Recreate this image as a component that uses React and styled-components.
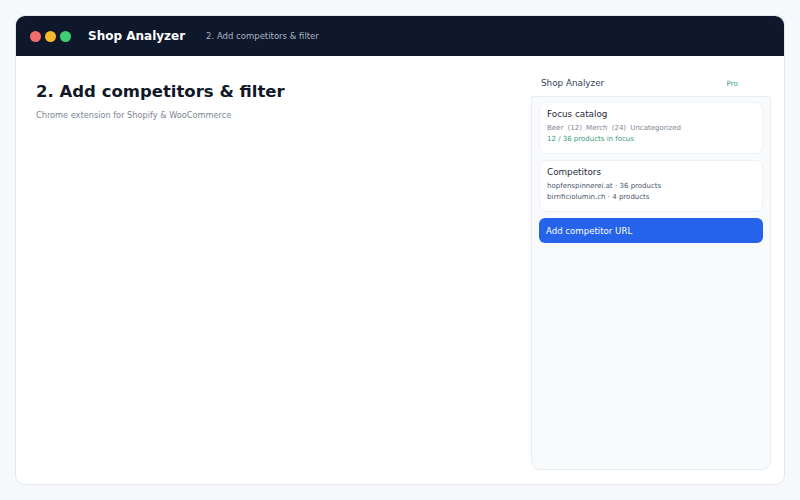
import React from "react";
import styled, { createGlobalStyle } from "styled-components";

const GlobalStyle = createGlobalStyle`
  html, body {
    margin: 0;
    padding: 0;
    background: #f6f8fb;
    font-family: "DejaVu Sans", "Liberation Sans", sans-serif;
  }
`;

const Page = styled.div`
  width: 800px;
  height: 500px;
  padding: 15px;
  box-sizing: border-box;
`;

const Frame = styled.div`
  height: 100%;
  background: #ffffff;
  border: 1px solid #e3e8ef;
  border-radius: 10px;
  overflow: hidden;
  display: flex;
  flex-direction: column;
  box-sizing: border-box;
`;

const TitleBar = styled.header`
  height: 40px;
  flex-shrink: 0;
  background: #111827;
  background: #0f172a;
  display: flex;
  align-items: center;
  padding-left: 14px;
`;

const Dots = styled.div`
  display: flex;
  gap: 4px;
  margin-right: 17px;
`;

const Dot = styled.span`
  width: 11px;
  height: 11px;
  border-radius: 50%;
  background: ${(p) => p.color};
`;

const Brand = styled.span`
  color: #ffffff;
  font-weight: 700;
  font-size: 12px;
  margin-right: 21px;
`;

const Crumb = styled.span`
  color: #aab4c3;
  font-size: 8.5px;
`;

const Body = styled.div`
  flex: 1;
  display: flex;
  min-height: 0;
`;

const Main = styled.main`
  flex: 1;
  padding: 25px 20px;
`;

const Heading = styled.h1`
  margin: 0;
  font-size: 16.5px;
  font-weight: 700;
  color: #111827;
  line-height: 22px;
`;

const Subtitle = styled.p`
  margin: 7px 0 0;
  font-size: 8.2px;
  color: #7b8594;
`;

const Sidebar = styled.aside`
  width: 240px;
  margin: 14px 13px 14px 0;
  display: flex;
  flex-direction: column;
`;

const SideHeader = styled.div`
  height: 26px;
  display: flex;
  align-items: center;
  justify-content: space-between;
  padding: 0 33px 0 10px;
  font-size: 8.8px;
  color: #334155;
`;

const ProTag = styled.span`
  color: #34a37a;
  font-size: 7.2px;
`;

const Panel = styled.div`
  flex: 1;
  background: #f8fafc;
  border: 1px solid #e8edf2;
  border-radius: 2px 2px 9px 9px;
  padding: 5px 7px;
  display: flex;
  flex-direction: column;
  gap: 6px;
`;

const Card = styled.section`
  background: #ffffff;
  border: 1px solid #eef1f5;
  border-radius: 7px;
  padding: 6px 7px 8px;
  height: 52px;
  box-sizing: border-box;
`;

const CardTitle = styled.div`
  font-size: 8.8px;
  color: #1f2937;
  margin-bottom: 4px;
`;

const CardLine = styled.div`
  font-size: 7px;
  line-height: 11px;
  color: ${(p) => (p.accent ? "#3a9d78" : p.muted ? "#7b8594" : "#475569")};
  word-spacing: ${(p) => (p.spaced ? "2px" : "normal")};
`;

const PrimaryButton = styled.button`
  height: 25px;
  border: none;
  border-radius: 6px;
  background: #2563eb;
  color: #ffffff;
  font-family: inherit;
  font-size: 8.6px;
  text-align: left;
  padding: 0 7px;
  cursor: pointer;
`;

const competitors = [
  { domain: "hopfenspinnerei.at", count: 36 },
  { domain: "birrificiolumin.ch", count: 4 },
];

export default function App() {
  return (
    <>
      <GlobalStyle />
      <Page>
        <Frame>
          <TitleBar>
            <Dots>
              <Dot color="#f26b6b" />
              <Dot color="#f6b92b" />
              <Dot color="#3fcf72" />
            </Dots>
            <Brand>Shop Analyzer</Brand>
            <Crumb>2. Add competitors &amp; filter</Crumb>
          </TitleBar>
          <Body>
            <Main>
              <Heading>2. Add competitors &amp; filter</Heading>
              <Subtitle>Chrome extension for Shopify &amp; WooCommerce</Subtitle>
            </Main>
            <Sidebar>
              <SideHeader>
                <span>Shop Analyzer</span>
                <ProTag>Pro</ProTag>
              </SideHeader>
              <Panel>
                <Card>
                  <CardTitle>Focus catalog</CardTitle>
                  <CardLine muted spaced>
                    Beer (12) Merch (24) Uncategorized
                  </CardLine>
                  <CardLine accent>12 / 36 products in focus</CardLine>
                </Card>
                <Card>
                  <CardTitle>Competitors</CardTitle>
                  {competitors.map((c) => (
                    <CardLine key={c.domain}>
                      {c.domain} · {c.count} products
                    </CardLine>
                  ))}
                </Card>
                <PrimaryButton>Add competitor URL</PrimaryButton>
              </Panel>
            </Sidebar>
          </Body>
        </Frame>
      </Page>
    </>
  );
}
